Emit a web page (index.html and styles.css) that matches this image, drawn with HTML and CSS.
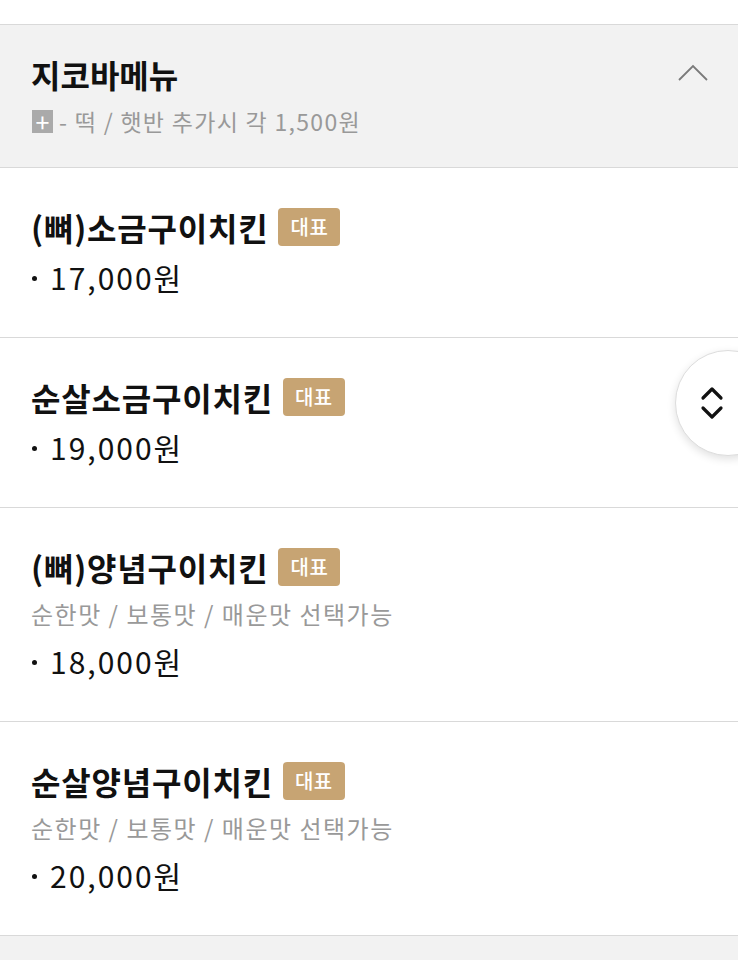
FILE: index.html
```html
<html>
<head>
<title>지코바메뉴</title>
<meta name="viewport" content="width=device-width, initial-scale=1.0">
<link rel="stylesheet" href="styles.css">
</head>
<body>
	<div class="top"></div>

	<div class="group">
		<div class="group_head">
			<h3>지코바메뉴</h3>
			<svg class="fold" width="30" height="18" viewBox="0 0 30 18"><path d="M1 16 L15 2 L29 16" fill="none" stroke="#7a7a7a" stroke-width="1.8"/></svg>
		</div>
		<p class="group_note"><span class="plus">+</span> - 떡 / 햇반 추가시 각 1,500원</p>
	</div>

	<ul class="menu">
		<li class="item">
			<div class="name"><h4>(뼈)소금구이치킨</h4><span class="badge">대표</span></div>
			<p class="price"><span class="dot"></span>17,000원</p>
		</li>
		<li class="item">
			<div class="name"><h4>순살소금구이치킨</h4><span class="badge">대표</span></div>
			<p class="price"><span class="dot"></span>19,000원</p>
		</li>
		<li class="item">
			<div class="name"><h4>(뼈)양념구이치킨</h4><span class="badge">대표</span></div>
			<p class="desc">순한맛 / 보통맛 / 매운맛 선택가능</p>
			<p class="price"><span class="dot"></span>18,000원</p>
		</li>
		<li class="item">
			<div class="name"><h4>순살양념구이치킨</h4><span class="badge">대표</span></div>
			<p class="desc">순한맛 / 보통맛 / 매운맛 선택가능</p>
			<p class="price"><span class="dot"></span>20,000원</p>
		</li>
	</ul>

	<div class="bottom"></div>

	<button class="scroller">
		<svg width="24" height="36" viewBox="0 0 24 36"><path d="M3 13 L12 4 L21 13 M3 23 L12 32 L21 23" fill="none" stroke="#111" stroke-width="3.2" stroke-linecap="round" stroke-linejoin="round"/></svg>
	</button>
</body>
</html>
```

FILE: styles.css
```css
body{
	margin:0;padding:0;
	background:#fff;
	font-family:"Noto Sans CJK KR","Noto Sans",sans-serif;
	color:#111;
	overflow:hidden;
}

	div.top{
		height:24px;
		border-bottom:1px solid #d9d9d9;
	}

	div.group{
		background:#f2f2f2;
		padding:27px 30px 21px 31px;
		border-bottom:1px solid #d9d9d9;
	}

	div.group_head{
		display:flex;
		align-items:center;
		justify-content:space-between;
		height:44px;
	}

	div.group_head h3{
		margin:0;
		font-size:32px;
		font-weight:bold;
	}

	svg.fold{
		margin-top:-2px;
	}

	p.group_note{
		margin:0;
		height:50px;
		line-height:50px;
		font-size:23px;
		color:#999;
		display:flex;
		align-items:center;
		gap:6px;
		letter-spacing:1.3px;
	}

	span.plus{
		display:inline-flex;
		align-items:center;
		justify-content:center;
		width:21px;
		height:23px;
		background:#aaa;
		color:#fff;
		font-size:25px;
		line-height:23px;
		margin-left:1px;
		letter-spacing:0;
	}

	ul.menu{
		list-style:none;
		margin:0;padding:0;
	}

	li.item{
		padding:34px 31px 35px 31px;
		border-bottom:1px solid #d9d9d9;
	}

	div.name{
		display:flex;
		align-items:center;
		gap:10px;
		height:50px;
	}

	div.name h4{
		margin:0;
		font-size:32px;
		font-weight:bold;
		letter-spacing:0.8px;
	}

	span.badge{
		display:inline-block;
		background:#c7a473;
		color:#fff;
		font-size:20px;
		font-weight:500;
		height:38px;
		line-height:38px;
		padding:0 12px;
		border-radius:4px;
		letter-spacing:0.5px;
	}

	p.desc{
		margin:0;
		height:44px;
		line-height:44px;
		font-size:24px;
		color:#999;
		letter-spacing:1.5px;
	}

	p.price{
		margin:0;
		height:50px;
		line-height:50px;
		font-size:30px;
		letter-spacing:2px;
		display:flex;
		align-items:center;
	}

	span.dot{
		display:inline-block;
		width:5px;
		height:5px;
		border-radius:50%;
		background:#111;
		margin:2px 13px 0 1px;
	}

	div.bottom{
		background:#f2f2f2;
		height:60px;
	}

	button.scroller{
		position:absolute;
		left:675px;
		top:350px;
		width:106px;
		height:106px;
		border-radius:50%;
		border:1px solid #ddd;
		background:#fff;
		box-shadow:0 3px 8px rgba(0,0,0,0.12);
		padding:0 0 0 24px;
		display:flex;
		align-items:center;
		justify-content:flex-start;
	}
```
